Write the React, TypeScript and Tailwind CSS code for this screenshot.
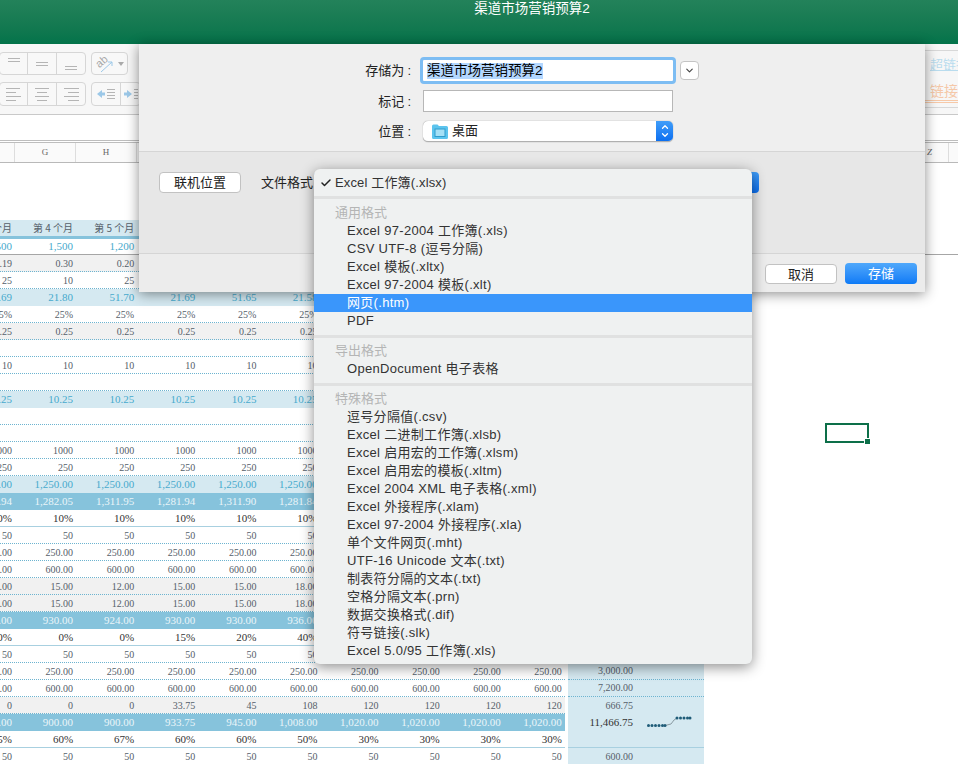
import React from 'react';
import { ChevronDown, ChevronUp, Check } from 'lucide-react';

// Sheet rows: kind decides the look of the row, values run from the clipped column to the last one
type Kind = 'plain' | 'gray' | 'light' | 'dark' | 'blank' | 'pct' | 'pctLite';

const rep = (v: string, n = 10) => Array.from({ length: n }, () => v);

const rows: { kind: Kind; values: string[]; total?: string; totalStrong?: boolean; spark?: boolean; line?: boolean; dotted?: boolean }[] = [
  { kind: 'gray', values: ['0.19', '0.30', '0.20'] },
  { kind: 'plain', values: ['25', '10', '25'] },
  { kind: 'light', values: ['51.69', '21.80', '51.70', '21.69', '51.65', '21.58'] },
  { kind: 'pctLite', values: rep('25%', 6) },
  { kind: 'gray', values: rep('0.25', 6) },
  { kind: 'blank', values: [] },
  { kind: 'plain', values: rep('10', 6) },
  { kind: 'blank', values: [] },
  { kind: 'light', values: rep('10.25', 6) },
  { kind: 'blank', values: [] },
  { kind: 'blank', values: [] },
  { kind: 'plain', values: rep('1000', 6) },
  { kind: 'plain', values: rep('250', 6) },
  { kind: 'light', values: rep('1,250.00', 6) },
  { kind: 'dark', values: ['1,311.94', '1,282.05', '1,311.95', '1,281.94', '1,311.90', '1,281.84'] },
  { kind: 'pct', values: rep('10%', 6) },
  { kind: 'plain', values: rep('50', 6) },
  { kind: 'plain', values: rep('250.00', 6) },
  { kind: 'plain', values: rep('600.00', 6) },
  { kind: 'gray', values: ['15.00', '15.00', '12.00', '15.00', '15.00', '18.00'] },
  { kind: 'gray', values: ['15.00', '15.00', '12.00', '15.00', '15.00', '18.00'] },
  { kind: 'dark', values: ['900.00', '930.00', '924.00', '930.00', '930.00', '936.00'] },
  { kind: 'pct', values: ['0%', '0%', '0%', '15%', '20%', '40%'] },
  { kind: 'plain', values: rep('50', 6) },
  { kind: 'plain', values: rep('250.00'), total: '3,000.00', dotted: true },
  { kind: 'plain', values: rep('600.00'), total: '7,200.00', dotted: true },
  { kind: 'gray', values: ['0', '0', '0', '33.75', '45', '108', '120', '120', '120', '120'], total: '666.75' },
  {
    kind: 'dark',
    values: ['900.00', '900.00', '900.00', '933.75', '945.00', '1,008.00', '1,020.00', '1,020.00', '1,020.00', '1,020.00'],
    total: '11,466.75',
    totalStrong: true,
    spark: true,
  },
  { kind: 'pct', values: ['75%', '60%', '67%', '60%', '60%', '50%', '30%', '30%', '30%', '30%'], line: true },
  { kind: 'plain', values: rep('50'), total: '600.00' },
];

const kindClass: Record<Kind, string> = {
  plain: 'bg-white text-[#55606a] border-b border-dotted border-[#6db4d0] pt-[2px]',
  blank: 'bg-white border-b border-dotted border-[#6db4d0]',
  gray: 'bg-[#f1f1f1] text-[#55606a] border-b border-dotted border-[#6db4d0] pt-[2px]',
  light: 'bg-[#d5e9f1] text-[#47aacd] text-[11px]',
  dark: 'bg-[#86c3dc] text-[#eaf5f9] text-[11px]',
  pct: 'bg-white text-[#333333] text-[11px] border-b border-[#a8d0e0]',
  pctLite: 'bg-white text-[#55606a] border-b border-dotted border-[#6db4d0] pt-[2px]',
};

const numberFont = "font-['Liberation_Serif','Noto_Sans_CJK_SC',serif]";

function Cells({ values }: { values: string[] }) {
  return (
    <>
      {Array.from({ length: 10 }, (_, i) => (
        <div
          key={i}
          className={`flex shrink-0 justify-end overflow-hidden whitespace-nowrap pr-[2px] ${i === 0 ? 'w-[14px]' : 'w-[61.1px]'}`}
        >
          {values[i] ?? ''}
        </div>
      ))}
    </>
  );
}

function Sparkline() {
  return (
    <svg width="46" height="14" viewBox="0 0 46 14" className="ml-[14px] shrink-0">
      <path d="M18 9.5 L24 8 L27 4 L30 2" fill="none" stroke="#8a9ba3" strokeWidth="1" />
      {[1.5, 5, 8.5, 12, 15.5, 18].map((x) => (
        <circle key={x} cx={x} cy="9.5" r="1.5" fill="#1f5c78" />
      ))}
      {[30, 33.5, 37, 40.5, 43].map((x) => (
        <circle key={x} cx={x} cy="2" r="1.5" fill="#1f5c78" />
      ))}
    </svg>
  );
}

function SheetRow({ row }: { row: (typeof rows)[number] }) {
  return (
    <div className={`flex h-[17px] items-center text-[10px] leading-none ${numberFont}`}>
      <div className={`flex h-full w-[565px] shrink-0 items-center ${kindClass[row.kind]}`}>
        <Cells values={row.values} />
      </div>
      <div className="h-full w-[3px] shrink-0" />
      <div
        className={`flex h-full w-[136px] shrink-0 items-center bg-[#d5e9f1] ${
          row.line ? 'border-b border-[#a8d0e0]' : row.dotted ? 'border-b border-dotted border-[#6db4d0]' : ''
        }`}
      >
        <div className={`w-[65px] text-right ${row.totalStrong ? 'text-[11px] text-[#333333]' : 'text-[#55606a]'}`}>{row.total}</div>
        {row.spark && <Sparkline />}
      </div>
    </div>
  );
}

function AlignIcon({ lines }: { lines: [number, number][] }) {
  return (
    <svg width="20" height="14" viewBox="0 0 20 14">
      {lines.map(([x, w], i) => (
        <rect key={i} x={x} y={1 + i * 4} width={w} height="1" fill="#b5b5b5" />
      ))}
    </svg>
  );
}

function Ribbon() {
  const seg = 'flex h-full w-[29px] items-center justify-center border-r border-[#d6d6d6] last:border-r-0';
  const group = 'flex rounded-[4px] border border-[#d6d6d6] bg-[#f8f8f8]';
  return (
    <div className="relative h-[71px] border-b border-[#c9c9c9] bg-[#f7f7f7] pt-[8px]">
      {/* vertical alignment + orientation */}
      <div className="flex h-[23px] gap-[5px]">
        <div className={`${group} ml-[-1px] w-[87px]`}>
          <div className={seg}><div className="mb-[8px] h-[4px] w-[12px] border-y border-[#b5b5b5]" /></div>
          <div className={seg}><div className="h-[4px] w-[12px] border-y border-[#b5b5b5]" /></div>
          <div className={seg}><div className="mt-[8px] h-[4px] w-[12px] border-y border-[#b5b5b5]" /></div>
        </div>
        <div className={`${group} w-[37px] items-center justify-center gap-[2px]`}>
          <svg width="20" height="20" viewBox="0 0 20 20">
            <text x="0" y="11" fontSize="11" fill="#a8a8a8" transform="rotate(-40 6 8)" fontFamily="Liberation Sans">ab</text>
            <path d="M5 18 L16 8 M12 8 H16 V12" fill="none" stroke="#9cc8e8" strokeWidth="1" />
          </svg>
          <div className="h-0 w-0 border-x-[3px] border-t-[4px] border-x-transparent border-t-[#aaaaaa]" />
        </div>
      </div>
      {/* horizontal alignment + indents */}
      <div className="mt-[7px] flex h-[24px] gap-[5px]">
        <div className={`${group} ml-[-1px] w-[87px]`}>
          <div className={seg}><AlignIcon lines={[[2, 14], [2, 10], [2, 15], [2, 10]]} /></div>
          <div className={seg}><AlignIcon lines={[[3, 14], [5, 10], [3, 14], [5, 10]]} /></div>
          <div className={seg}><AlignIcon lines={[[3, 15], [7, 11], [3, 15], [7, 11]]} /></div>
        </div>
        <div className={`${group} w-[50px]`}>
          <div className="flex h-full w-[29px] items-center justify-center border-r border-[#d6d6d6]">
            <svg width="18" height="12" viewBox="0 0 18 12">
              <path d="M0 6 L5 2 V4.5 H8 V7.5 H5 V10 Z" fill="#9cc8e8" />
              <path d="M10 1.5 H18 M10 4.5 H18 M10 7.5 H18 M10 10.5 H18" stroke="#b5b5b5" />
            </svg>
          </div>
          <div className="flex h-full flex-1 items-center justify-center">
            <svg width="14" height="12" viewBox="0 0 14 12">
              <path d="M8 6 L3 2 V4.5 H0 V7.5 H3 V10 Z" fill="#9cc8e8" />
              <path d="M10 1.5 H14 M10 4.5 H14 M10 7.5 H14 M10 10.5 H14" stroke="#b5b5b5" />
            </svg>
          </div>
        </div>
      </div>
      {/* cell styles at the far right */}
      <div className="absolute left-[925px] top-[6px] h-[58px] w-[33px] overflow-hidden border-y border-[#d8d8d8] whitespace-nowrap">
        <div className="ml-[5px] mt-[6px] w-[40px] text-[13px] leading-[15px] text-[#b9dcee] underline">超链接</div>
        <div className="mt-[11px] w-[33px] border-b-[3px] border-double border-[#f7c9a8] pl-[5px] text-[14px] leading-[17px] text-[#f5c8a8]">链接单</div>
      </div>
    </div>
  );
}

function Sheet() {
  return (
    <div className="bg-white">
      {/* formula bar */}
      <div className="h-[28px] border-b-[3px] border-double border-[#bdbdbd] bg-white" />
      {/* column letters */}
      <div className={`flex h-[20px] border-b border-[#b9b9b9] bg-[#fafafa] text-[9px] text-[#666666] ${numberFont}`}>
        {['', 'G', 'H'].map((c, i) => (
          <div key={i} className={`flex shrink-0 items-center justify-center border-r border-[#dddddd] ${i === 0 ? 'w-[15px]' : 'w-[61px]'}`}>
            {c}
          </div>
        ))}
        <div className="ml-auto flex w-[33px] shrink-0 items-center">
          <div className="w-[24px] border-r border-[#dddddd] pl-[2px] leading-[19px] italic">Z</div>
        </div>
      </div>
      <div className="h-[57px]" />
      {/* month header */}
      <div className={`h-[19px] w-[565px] border-b-[3px] border-[#86c3dc] bg-[#d5e9f1] text-[10px] text-[#55606a] ${numberFont}`}>
        <div className="flex h-full items-center leading-none font-['Noto_Sans_CJK_SC',sans-serif]">
          <Cells values={['第 3 个月', '第 4 个月', '第 5 个月']} />
        </div>
      </div>
      <div className={`flex h-[16px] items-center border-b border-[#a6a6a6] text-[11px] leading-none ${numberFont} text-[#47aacd]`}>
        <Cells values={['1,500', '1,500', '1,200']} />
      </div>
      {rows.map((row, i) => (
        <SheetRow key={i} row={row} />
      ))}
    </div>
  );
}

function Label({ text }: { text: string }) {
  return (
    <div className="w-[284px] shrink-0 pr-[12px] text-right text-[13px] leading-none text-[#222222]">
      {text}
      <span className="ml-[3px]">:</span>
    </div>
  );
}

function SaveDialog() {
  return (
    <div className="absolute left-[139px] top-[44px] flex h-[248px] w-[786px] flex-col bg-[#e7e7e7] shadow-[0_2px_12px_rgba(0,0,0,0.45)]">
      <div className="flex h-[108px] flex-col border-b border-[#d5d5d5] bg-[#efefef] pt-[16px]">
        <div className="flex h-[21px] items-center">
          <Label text="存储为" />
          <div className="flex h-[21px] w-[250px] items-center rounded-[1px] bg-white pl-[4px] outline-3 outline-[#7dbdf3]">
            <span className="bg-[#b3d7ff] text-[13.5px] leading-[16px] text-black">渠道市场营销预算2</span>
          </div>
          <div className="ml-[7px] flex h-[19px] w-[19px] items-center justify-center rounded-[4px] border border-[#c4c4c4] bg-white">
            <ChevronDown size={11} strokeWidth={2.5} className="text-[#444444]" />
          </div>
        </div>
        <div className="mt-[9px] flex h-[22px] items-center">
          <Label text="标记" />
          <div className="h-[22px] w-[250px] border border-[#b7b7b7] bg-white" />
        </div>
        <div className="mt-[9px] flex h-[21px] items-center">
          <Label text="位置" />
          <div className="flex h-[21px] w-[250px] items-center overflow-hidden rounded-[5px] border-b border-[#b0b0b0] bg-white shadow-[0_0_1px_rgba(0,0,0,0.5)]">
            <svg width="16" height="15" viewBox="0 0 16 15" className="ml-[9px]">
              <path d="M0 2 Q0 0.5 1.5 0.5 H5.5 L7 2 H14.5 Q16 2 16 3.5 V13.5 Q16 15 14.5 15 H1.5 Q0 15 0 13.5 Z" fill="#5cc4ee" />
              <rect x="3" y="5" width="10" height="7.5" fill="#a5e0f6" stroke="#2f9ccc" strokeWidth="1" />
            </svg>
            <span className="ml-[4px] text-[13px] text-[#222222]">桌面</span>
            <div className="ml-auto flex h-full w-[17px] flex-col items-center justify-center bg-gradient-to-b from-[#3f9df9] to-[#0a6ff0] text-white">
              <ChevronUp size={10} strokeWidth={3} className="-mb-[1px]" />
              <ChevronDown size={10} strokeWidth={3} className="-mt-[1px]" />
            </div>
          </div>
        </div>
      </div>
      <div className="flex h-[102px] border-b border-[#d5d5d5] pl-[20px] pt-[20px]">
        <button className="h-[21px] w-[82px] rounded-[4px] border border-[#c2c2c2] bg-white text-[13px] leading-none text-[#222222]">联机位置</button>
        <span className="ml-[20px] text-[13px] leading-[21px] text-[#222222]">文件格式</span>
        <div className="ml-[1px] h-[21px] w-[445px] rounded-[4px] bg-gradient-to-b from-[#3f9df9] to-[#0a6ff0]" />
      </div>
      <div className="flex flex-1 items-start justify-end gap-[8px] bg-[#ececec] pr-[8px] pt-[9px]">
        <button className="mt-[1px] h-[20px] w-[72px] rounded-[4px] border border-[#c2c2c2] bg-white text-[13px] leading-none text-[#222222]">取消</button>
        <button className="h-[21px] w-[72px] rounded-[4px] bg-gradient-to-b from-[#4fa8fb] to-[#0a7af6] text-[13px] leading-none text-white">存储</button>
      </div>
    </div>
  );
}

const generalFormats = ['Excel 97-2004 工作簿(.xls)', 'CSV UTF-8 (逗号分隔)', 'Excel 模板(.xltx)', 'Excel 97-2004 模板(.xlt)', '网页(.htm)', 'PDF'];
const specialFormats = [
  '逗号分隔值(.csv)',
  'Excel 二进制工作簿(.xlsb)',
  'Excel 启用宏的工作簿(.xlsm)',
  'Excel 启用宏的模板(.xltm)',
  'Excel 2004 XML 电子表格(.xml)',
  'Excel 外接程序(.xlam)',
  'Excel 97-2004 外接程序(.xla)',
  '单个文件网页(.mht)',
  'UTF-16 Unicode 文本(.txt)',
  '制表符分隔的文本(.txt)',
  '空格分隔文本(.prn)',
  '数据交换格式(.dif)',
  '符号链接(.slk)',
  'Excel 5.0/95 工作簿(.xls)',
];

function MenuItem({ text, active }: { text: string; active?: boolean }) {
  return (
    <div className={`h-[18px] pl-[33px] text-[13px] leading-[18px] tracking-[0.3px] whitespace-nowrap ${active ? 'bg-[#3a96fb] text-white' : 'text-[#333333]'}`}>
      {text}
    </div>
  );
}

function MenuHeader({ text }: { text: string }) {
  return <div className="h-[18px] pl-[21px] text-[13px] leading-[18px] text-[#b4b5b5]">{text}</div>;
}

function MenuDivider() {
  return <div className="h-[3px] bg-[#e0e1e1]" />;
}

function FormatMenu() {
  return (
    <div className="absolute left-[314px] top-[169px] h-[495px] w-[438px] overflow-hidden rounded-[6px] bg-[#eff1f1] pt-[5px] shadow-[0_3px_14px_rgba(0,0,0,0.45)]">
      <div className="relative h-[18px] pl-[21px] text-[13px] leading-[18px] tracking-[0.15px] text-[#333333]">
        <Check size={12} strokeWidth={3} className="absolute left-[6px] top-[3px] text-[#222222]" />
        Excel 工作簿(.xlsx)
      </div>
      <div className="mt-[4px]"><MenuDivider /></div>
      <div className="mt-[5px]"><MenuHeader text="通用格式" /></div>
      {generalFormats.map((f) => (
        <MenuItem key={f} text={f} active={f === '网页(.htm)'} />
      ))}
      <div className="mt-[5px]"><MenuDivider /></div>
      <div className="mt-[4px]"><MenuHeader text="导出格式" /></div>
      <MenuItem text="OpenDocument 电子表格" />
      <div className="mt-[5px]"><MenuDivider /></div>
      <div className="mt-[4px]"><MenuHeader text="特殊格式" /></div>
      {specialFormats.map((f) => (
        <MenuItem key={f} text={f} />
      ))}
    </div>
  );
}

export default function App() {
  return (
    <div className="relative h-[764px] w-[958px] overflow-hidden bg-white font-['Liberation_Sans','Noto_Sans_CJK_SC',sans-serif]">
      {/* title bar */}
      <div className="flex h-[44px] justify-center bg-gradient-to-b from-[#23825a] to-[#03734a] pl-[106px] pt-[1px] text-[13.5px] leading-[16px] text-white">
        渠道市场营销预算2
      </div>
      <Ribbon />
      <Sheet />

      {/* selected cell on the right */}
      <div className="absolute left-[825px] top-[423px] h-[20px] w-[44px] border-2 border-[#0d6f49]">
        <div className="absolute -bottom-[4px] -right-[4px] h-[7px] w-[7px] border border-white bg-[#0d6f49]" />
      </div>

      <SaveDialog />
      <FormatMenu />
    </div>
  );
}
